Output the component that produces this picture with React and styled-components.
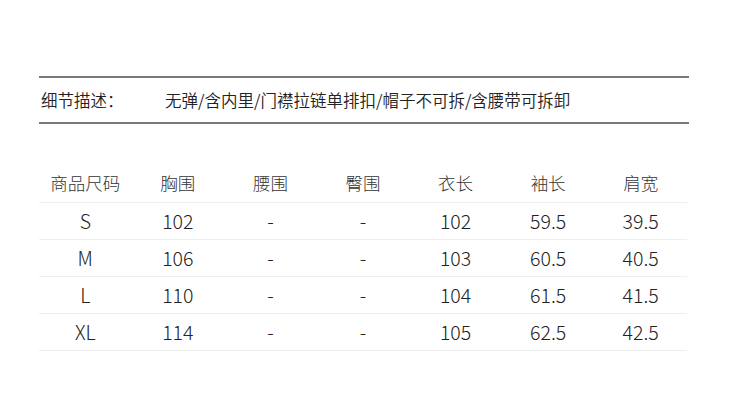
import React from "react";
import styled, { createGlobalStyle } from "styled-components";

const GlobalStyle = createGlobalStyle`
  html, body {
    margin: 0;
    padding: 0;
    background: #fff;
  }
  body {
    font-family: "Noto Sans CJK SC", "Noto Sans", sans-serif;
    color: #333;
  }
`;

const sizes = [
  { size: "S", chest: "102", waist: "-", hip: "-", length: "102", sleeve: "59.5", shoulder: "39.5" },
  { size: "M", chest: "106", waist: "-", hip: "-", length: "103", sleeve: "60.5", shoulder: "40.5" },
  { size: "L", chest: "110", waist: "-", hip: "-", length: "104", sleeve: "61.5", shoulder: "41.5" },
  { size: "XL", chest: "114", waist: "-", hip: "-", length: "105", sleeve: "62.5", shoulder: "42.5" },
];

const headers = ["商品尺码", "胸围", "腰围", "臀围", "衣长", "袖长", "肩宽"];

function App() {
  return (
    <>
      <GlobalStyle />
      <Page>
        <Details>
          <Label>细节描述：</Label>
          <Desc>无弹/含内里/门襟拉链单排扣/帽子不可拆/含腰带可拆卸</Desc>
        </Details>

        <SizeTable>
          <HeadRow>
            {headers.map((h) => (
              <HeadCell key={h}>{h}</HeadCell>
            ))}
          </HeadRow>
          {sizes.map((r) => (
            <Row key={r.size}>
              <Cell>{r.size}</Cell>
              <Cell>{r.chest}</Cell>
              <Cell>{r.waist}</Cell>
              <Cell>{r.hip}</Cell>
              <Cell>{r.length}</Cell>
              <Cell>{r.sleeve}</Cell>
              <Cell>{r.shoulder}</Cell>
            </Row>
          ))}
        </SizeTable>
      </Page>
    </>
  );
}

const Page = styled.div`
  width: 730px;
  height: 411px;
  padding: 76px 0 0 39px;
  box-sizing: border-box;
`;

const Details = styled.div`
  width: 650px;
  height: 48px;
  box-sizing: border-box;
  border-top: 2px solid #7a7a7a;
  border-bottom: 2px solid #7a7a7a;
  display: flex;
  align-items: center;
  padding-left: 2px;
  font-size: 16.5px;
  font-weight: 350;
  color: #222;
`;

const Label = styled.span`
  width: 124px;
  flex-shrink: 0;
`;

const Desc = styled.span`
  white-space: nowrap;
`;

const SizeTable = styled.div`
  width: 648px;
  margin-top: 42px;
  display: flex;
  flex-direction: column;
`;

const HeadRow = styled.div`
  display: grid;
  grid-template-columns: repeat(7, 1fr);
  height: 37px;
  border-bottom: 1px solid #eeeeee;
  align-items: center;
  padding-bottom: 3px;
  box-sizing: border-box;
`;

const HeadCell = styled.div`
  text-align: center;
  font-size: 17.5px;
  font-weight: 300;
  color: #333;
`;

const Row = styled.div`
  display: grid;
  grid-template-columns: repeat(7, 1fr);
  height: 37px;
  border-bottom: 1px solid #eeeeee;
  align-items: center;
  box-sizing: border-box;
`;

const Cell = styled.div`
  text-align: center;
  font-size: 19.5px;
  font-weight: 300;
  color: #222;
  line-height: 1;
`;

export default App;
